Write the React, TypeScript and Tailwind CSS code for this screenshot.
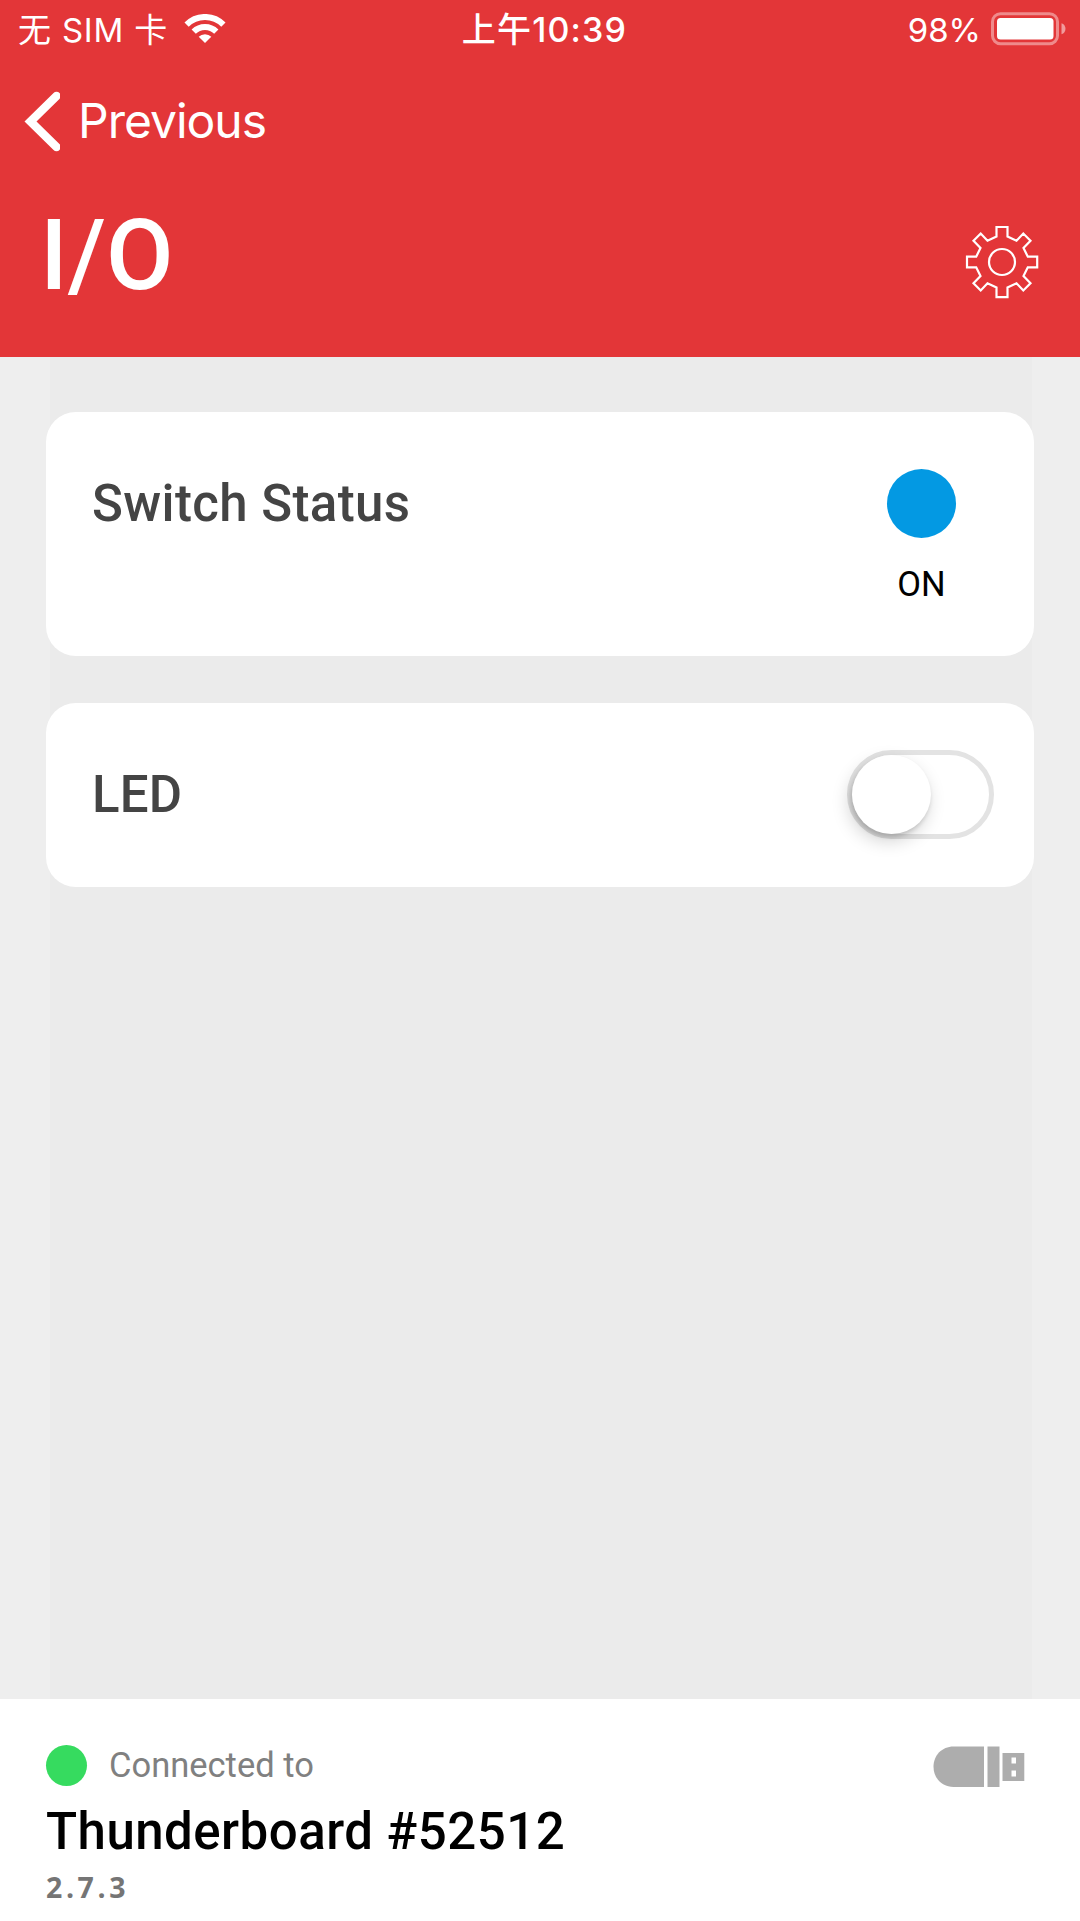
import React from "react";

function WifiIcon() {
  return (
    <svg width="42" height="30" viewBox="0 0 42 30" fill="none" className="-mt-[2px] block shrink-0">
      <path d="M2.6 10.6a26 26 0 0 1 36.8 0" stroke="#fff" strokeWidth="6" />
      <path d="M9.7 17.7a16 16 0 0 1 22.6 0" stroke="#fff" strokeWidth="6" />
      <path d="M21 29l-6.3-6.2a9 9 0 0 1 12.6 0z" fill="#fff" />
    </svg>
  );
}

function BatteryIcon() {
  return (
    <svg width="76" height="34" viewBox="0 0 76 34" fill="none" className="ml-[9px] -mt-[3px] block shrink-0">
      <rect x="2.5" y="1.7" width="65" height="30" rx="8" stroke="#fff" strokeOpacity="0.42" strokeWidth="3" />
      <rect x="7" y="6" width="56.500" height="21.5" rx="3.5" fill="#fff" />
      <path d="M71.5 11.2c2.5.8 4 3 4 5.500s-1.500 4.700-4 5.500z" fill="#fff" fillOpacity="0.5" />
    </svg>
  );
}

function GearIcon() {
  return (
    <svg width="74" height="74" viewBox="-37 -37 74 74" fill="none" stroke="#fff" strokeWidth="2.2" className="block">
      <path d="M-5.500-35H5.500V-25.500L14.500-21.300L21.300-28.500L28.500-21.300L21.500-14L25.800-5.300H35.200V5.300H25.800L21.500 14L28.500 21.300L21.300 28.500L14.500 21.300L5.500 25.500V35.200H-5.500V25.500L-14.500 21.300L-21.300 28.500L-28.500 21.300L-21.500 14L-25.800 5.300H-35V-5.300H-25.800L-21.500-14L-28.500-21.300L-21.300-28.500L-14.500-21.300L-5.500-25.500Z" />
      <circle r="13" />
    </svg>
  );
}

function UsbIcon() {
  return (
    <svg width="92" height="42" viewBox="0 0 92 42" fill="#adadad" className="mt-[47px] block">
      <path d="M20.500 0.500H51V41H20.500C9 41 0.500 32 0.500 20.700S9 0.500 20.500 0.500Z" />
      <path d="M54.500 0.500H66.500V41H54.500Z" />
      <path fillRule="evenodd" d="M69.500 7H91.300V35H69.500ZM78.500 11.500V17.500H83V11.500ZM78.500 24.500V30.500H83V24.500Z" />
    </svg>
  );
}

function Header() {
  return (
    <header className="h-[357px] bg-[#e33638] font-['Inter','Noto_Sans_CJK_SC',sans-serif] text-white">
      <div className="grid h-[60px] grid-cols-3 items-center text-[33px] leading-[60px] whitespace-nowrap">
        <div className="flex items-center pl-[18px] font-normal">
          <span className="w-[166px] tracking-[0.8px]">无 SIM 卡</span>
          <WifiIcon />
        </div>
        <div className="pl-[9px] text-center text-[34px] font-medium tracking-[1.2px]">上午10:39</div>
        <div className="flex items-center justify-end pr-[14px] font-normal">
          <span>98%</span>
          <BatteryIcon />
        </div>
      </div>
      <button className="flex h-[122px] items-center pl-[24px]">
        <svg width="36" height="64" viewBox="0 0 36 64" fill="none" className="block">
          <path d="M32.500 7L6.500 32.500L32.500 58" stroke="#fff" strokeWidth="8.4" strokeLinecap="round" />
        </svg>
        <span className="ml-[18px] text-[48px] leading-[60px] tracking-[-1px]">Previous</span>
      </button>
      <div className="flex items-start justify-between pr-[41px] pl-[40px]">
        <h1 className="mt-[26px] font-['Roboto',sans-serif] text-[98px] leading-[96px] font-medium">I/O</h1>
        <button className="mt-[43px]" aria-label="Settings">
          <GearIcon />
        </button>
      </div>
    </header>
  );
}

export default function App() {
  return (
    <div className="flex h-[1921px] w-[1080px] flex-col bg-[#eeeeee] font-['Roboto',sans-serif]">
      <Header />
      <main className="relative flex-1 px-[46px] pt-[55px]">
        <div className="absolute inset-y-0 right-[48px] left-[50px] bg-[#ebebeb]" />
        <section className="relative flex h-[244px] items-start justify-between rounded-[30px] bg-white pr-[78px] pl-[46px]">
          <h2 className="mt-[62px] text-[51px] leading-[60px] font-medium tracking-[0.4px] text-[#444]">Switch Status</h2>
          <div className="mt-[57px] flex w-[69px] flex-col items-center">
            <div className="size-[69px] rounded-full bg-[#0399e3]" />
            <span className="mt-[26px] text-[34.500px] leading-[40px] text-black">ON</span>
          </div>
        </section>
        <section className="relative mt-[47px] flex h-[184px] items-center justify-between rounded-[30px] bg-white pr-[40px] pl-[46px]">
          <h2 className="text-[51px] leading-[60px] font-medium tracking-[0.2px] text-[#444]">LED</h2>
          <div className="mb-[2px] h-[89px] w-[147px] rounded-full border-[5.500px] border-[#e3e3e3]">
            <div className="size-[79px] rounded-full bg-white shadow-[-3px_7px_18px_rgba(0,0,0,0.18),-1px_3px_4px_rgba(0,0,0,0.14)]" />
          </div>
        </section>
      </main>
      <footer className="flex h-[222px] items-start justify-between bg-white pr-[55px] pl-[46px]">
        <div>
          <div className="mt-[46px] flex h-[41px] items-center">
            <div className="size-[41px] rounded-full bg-[#36db5f]" />
            <span className="-mt-[2px] ml-[22px] text-[34.500px] leading-[40px] text-[#808080]">Connected to</span>
          </div>
          <div className="mt-[16px] text-[51px] leading-[60px] font-medium tracking-[0.480px] text-black">Thunderboard #52512</div>
          <div className="mt-[5px] font-['Open_Sans',sans-serif] text-[28.500px] leading-[40px] font-bold tracking-[3.6px] text-[#757575]">2.7.3</div>
        </div>
        <UsbIcon />
      </footer>
    </div>
  );
}
